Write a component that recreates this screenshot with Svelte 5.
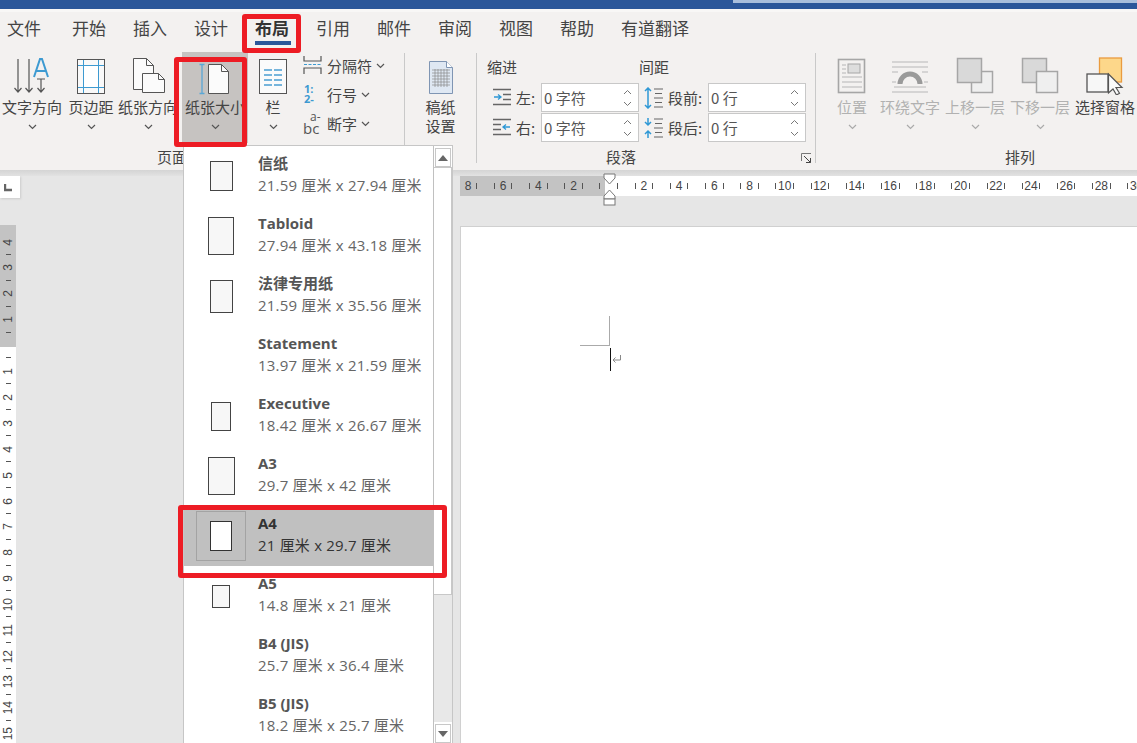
<script>
  const tabs = ['文件','开始','插入','设计','布局','引用','邮件','审阅','视图','帮助','有道翻译'];
  const papers = [
    { name:'信纸', size:'21.59 厘米 x 27.94 厘米', w:23, h:30 },
    { name:'Tabloid', size:'27.94 厘米 x 43.18 厘米', w:26, h:38 },
    { name:'法律专用纸', size:'21.59 厘米 x 35.56 厘米', w:23, h:33 },
    { name:'Statement', size:'13.97 厘米 x 21.59 厘米', w:0, h:0 },
    { name:'Executive', size:'18.42 厘米 x 26.67 厘米', w:20, h:29 },
    { name:'A3', size:'29.7 厘米 x 42 厘米', w:27, h:38 },
    { name:'A4', size:'21 厘米 x 29.7 厘米', w:22, h:30, selected:true },
    { name:'A5', size:'14.8 厘米 x 21 厘米', w:18, h:23 },
    { name:'B4 (JIS)', size:'25.7 厘米 x 36.4 厘米', w:0, h:0 },
    { name:'B5 (JIS)', size:'18.2 厘米 x 25.7 厘米', w:0, h:0 },
  ];
  const hLabels = ['8','6','4','2','','2','4','6','8','10','12','14','16','18','20','22','24','26','28','30'];
  const vLabels = ['4','3','2','1','','1','2','3','4','5','6','7','8','9','10','11','12','13','14','15'];
</script>

{#snippet chev(muted)}
  <svg class="chev" class:muted width="9" height="6" viewBox="0 0 9 6"><path d="M1 1l3.5 3.5L8 1" fill="none" stroke="currentColor" stroke-width="1.2"/></svg>
{/snippet}

{#snippet spin()}
  <span class="spin">
    <svg width="9" height="6" viewBox="0 0 9 6"><path d="M1 5l3.5-3.5L8 5" fill="none" stroke="#777" stroke-width="1"/></svg>
    <svg width="9" height="6" viewBox="0 0 9 6"><path d="M1 1l3.5 3.5L8 1" fill="none" stroke="#777" stroke-width="1"/></svg>
  </span>
{/snippet}

<div class="app">
  <div class="title"><span class="title-light"></span></div>

  <nav class="tabs">
    {#each tabs as t}
      <span class="tab" class:active={t === '布局'}>{t}</span>
    {/each}
  </nav>

  <div class="ribbon">
    <section class="group g1">
      <div class="row">
        <div class="big w1">
          <svg width="40" height="38" viewBox="0 0 40 38">
            <g fill="none" stroke="#555" stroke-width="1.2">
              <path d="M6 2v33M2.500 31l3.500 4 3.500-4"/><path d="M17 2v33M13.500 31l3.500 4 3.500-4"/><path d="M29 22v13M25.500 31l3.500 4 3.500-4M25 22h8"/>
            </g>
            <path d="M22 20L28 2h2l6 18M24 14h10" fill="none" stroke="#3d9ad1" stroke-width="2"/>
          </svg>
          <span>文字方向</span>{@render chev(false)}
        </div>
        <div class="big w2">
          <svg width="34" height="38" viewBox="0 0 34 38">
            <rect x="3.500" y="2.500" width="27" height="34" fill="#f9f9f9" stroke="#555"/>
            <path d="M9.500 3v33M24.500 3v33M4 8.500h26M4 30.500h26" stroke="#3d9ad1" fill="none"/>
            <rect x="10" y="9" width="14" height="21" fill="#fff"/>
          </svg>
          <span>页边距</span>{@render chev(false)}
        </div>
        <div class="big w3">
          <svg width="38" height="38" viewBox="0 0 38 38">
            <path d="M4.500 1.500h13l7 7v24h-20z" fill="#fbfbfb" stroke="#555"/><path d="M17.500 1.500v7h7" fill="none" stroke="#555"/>
            <path d="M13.500 16.500h16l6 6v13h-22z" fill="#fbfbfb" stroke="#555"/><path d="M29.500 16.500v6h6" fill="none" stroke="#555"/>
          </svg>
          <span>纸张方向</span>{@render chev(false)}
        </div>
        <div class="big w4 on">
          <svg width="38" height="38" viewBox="0 0 38 38">
            <path d="M6 7v30M3.500 7.500h5M3.500 36.500h5" fill="none" stroke="#5aa7d6" stroke-width="1.300"/>
            <path d="M12.500 7.500h13l7 7v22h-20z" fill="#fbfbfb" stroke="#555"/><path d="M25.500 7.500v7h7" fill="none" stroke="#555"/>
          </svg>
          <span>纸张大小</span>{@render chev(false)}
        </div>
        <div class="big w5">
          <svg width="30" height="38" viewBox="0 0 30 38">
            <rect x="1.500" y="2.500" width="27" height="34" fill="#fbfbfb" stroke="#555"/>
            <path d="M6 13h8M16 13h8M6 18h8M16 18h8M6 23h8M16 23h8M6 28h8M16 28h8" stroke="#4b9fd2" stroke-width="1.300"/>
          </svg>
          <span>栏</span>{@render chev(false)}
        </div>
        <div class="stack">
          <div class="small">
            <svg width="20" height="20" viewBox="0 0 20 20"><path d="M1 1v5h17V1M1 19v-6h17v6" fill="none" stroke="#555" stroke-width="1.200"/><path d="M1 9.500h17" stroke="#3d9ad1" stroke-dasharray="3 1.500"/></svg>
            <span>分隔符</span>{@render chev(false)}
          </div>
          <div class="small">
            <div class="ico lineno"><b>1:</b><b>2-</b></div>
            <span>行号</span>{@render chev(false)}
          </div>
          <div class="small">
            <div class="ico hyph"><i>a-</i><i>bc</i></div>
            <span>断字</span>{@render chev(false)}
          </div>
        </div>
      </div>
      <div class="glabel l1">页面设置</div>
    </section>

    <section class="group g2">
      <div class="big two">
        <svg width="34" height="38" viewBox="0 0 34 38">
          <path d="M5.500 4.500h17l6 6v26h-23z" fill="#dfe8f3" stroke="#7f95b3"/>
          <path d="M22.500 4.500v6h6" fill="#fff" stroke="#7f95b3"/>
          <path d="M8 13h18M8 16h18M8 19h18M8 22h18M8 25h18M8 28h18M11 12v18M14 12v18M17 12v18M20 12v18M23 12v18" stroke="#8a8a8a" stroke-width=".7"/>
        </svg>
        <span>稿纸<br/>设置</span>
      </div>
    </section>

    <section class="group g3">
      <div class="heads"><span>缩进</span><span>间距</span></div>
      <div class="fields">
        <svg width="19" height="19" viewBox="0 0 19 19"><path d="M0 1.500h18M10 6.500h8M10 11.500h8M0 16.500h18" stroke="#666" stroke-width="1.300"/><path d="M1 9h6M5 6.500L8 9l-3 2.500" fill="none" stroke="#2f98d5" stroke-width="1.300"/></svg>
        <span class="flabel">左:</span>
        <div class="input"><span>0 字符</span>{@render spin()}</div>
        <svg class="sp" width="20" height="22" viewBox="0 0 20 22"><path d="M4 1v20M1 4l3-3 3 3M1 18l3 3 3-3" fill="none" stroke="#2f98d5" stroke-width="1.500"/><path d="M10 2h9M10 11h9M10 20h9M11 6.500h7M11 15.500h7" stroke="#666" stroke-width="1.200"/></svg>
        <span class="flabel">段前:</span>
        <div class="input"><span>0 行</span>{@render spin()}</div>

        <svg width="19" height="19" viewBox="0 0 19 19"><path d="M0 1.500h18M0 6.500h8M0 11.500h8M0 16.500h18" stroke="#666" stroke-width="1.300"/><path d="M17 9h-6M13 6.500L10 9l3 2.500" fill="none" stroke="#2f98d5" stroke-width="1.300"/></svg>
        <span class="flabel">右:</span>
        <div class="input"><span>0 字符</span>{@render spin()}</div>
        <svg class="sp" width="20" height="22" viewBox="0 0 20 22"><path d="M4 1v7M1 5l3 3 3-3M4 21v-7M1 17l3-3 3 3" fill="none" stroke="#2f98d5" stroke-width="1.500"/><path d="M10 2h9M10 11h9M10 20h9M11 6.500h7M11 15.500h7" stroke="#666" stroke-width="1.200"/></svg>
        <span class="flabel">段后:</span>
        <div class="input"><span>0 行</span>{@render spin()}</div>
      </div>
      <div class="glabel l3">段落
        <svg class="launch" width="11" height="11" viewBox="0 0 11 11"><path d="M.5 8V.5H10" fill="none" stroke="#777"/><path d="M3 3l6.500 6.500M5 9.500h4.500V5" fill="none" stroke="#444"/></svg>
      </div>
    </section>

    <section class="group g4">
      <div class="row">
        <div class="big dis a1">
          <svg width="30" height="38" viewBox="0 0 30 38">
            <rect x="1.500" y="2.500" width="26" height="33" fill="#f3f1f0" stroke="#a6a6a6" stroke-width="1.600"/>
            <rect x="11" y="7" width="12" height="9" fill="#ddd" stroke="#a6a6a6"/>
            <path d="M5 8h4M5 12h4M5 16h4M5 20h20M5 25h20M5 30h20" stroke="#b5b5b5" stroke-width="1.200"/>
          </svg>
          <span>位置</span>{@render chev(true)}
        </div>
        <div class="big dis a2">
          <svg width="38" height="38" viewBox="0 0 38 38">
            <path d="M1 5h36M1 35h36M1 15h6M1 25h4M31 15h6M33 25h4M1 10h36" stroke="#b8b8b8" stroke-width="1.200" fill="none"/>
            <path d="M9 27a10 10 0 0 1 20 0" fill="none" stroke="#9a9a9a" stroke-width="5"/>
            <path d="M3 30h32" stroke="#b8b8b8"/>
          </svg>
          <span>环绕文字</span>{@render chev(true)}
        </div>
        <div class="big dis a3">
          <svg width="38" height="38" viewBox="0 0 38 38">
            <rect x="15.500" y="14.500" width="21" height="21" fill="#efefef" stroke="#a6a6a6" stroke-width="1.500"/>
            <rect x="1.500" y="1.500" width="24" height="24" fill="#d9d9d9" stroke="#a6a6a6" stroke-width="1.500"/>
          </svg>
          <span>上移一层</span>{@render chev(true)}
        </div>
        <div class="big dis a4">
          <svg width="38" height="38" viewBox="0 0 38 38">
            <rect x="1.500" y="1.500" width="24" height="24" fill="#d9d9d9" stroke="#a6a6a6" stroke-width="1.500"/>
            <rect x="15.500" y="14.500" width="21" height="21" fill="#efefef" stroke="#a6a6a6" stroke-width="1.500"/>
          </svg>
          <span>下移一层</span>{@render chev(true)}
        </div>
        <div class="big a5">
          <svg width="38" height="38" viewBox="0 0 38 38">
            <rect x="13.500" y="1" width="22" height="24" fill="#fdd78a" stroke="#ea9b3f" stroke-width="1.300"/>
            <rect x="1" y="17" width="21" height="18" fill="#f7f7f7" stroke="#555" stroke-width="1.300"/>
            <path d="M22.500 17v19l4.500-4 3.500 6 3-1.800-3.500-5.700H36z" fill="#fbfbfb" stroke="#555" stroke-width="1.200"/>
          </svg>
          <span>选择窗格</span>
        </div>
      </div>
      <div class="glabel l4">排列</div>
    </section>
  </div>
  <div class="shade"></div>

  <div class="work">
    <aside class="left">
      <div class="corner"><svg width="8" height="8" viewBox="0 0 8 8"><path d="M1 0v6h7" fill="none" stroke="#666" stroke-width="2.400"/></svg></div>
      <div class="vruler">
        {#each vLabels as n}
          <div class="vcell"><span class="vnum">{n}</span><i></i></div>
        {/each}
      </div>
    </aside>
    <main class="doc">
      <div class="hruler">
        {#each hLabels as n}
          <div class="hcell"><i></i><span>{n}</span><i></i></div>
        {/each}
      </div>
      <div class="page">
        <span class="mark-v"></span><span class="mark-h"></span><span class="caret"></span>
        <svg class="para" width="10" height="9" viewBox="0 0 10 9"><path d="M8.500 0v5H1M3.500 2.500L1 5l2.500 2.500" fill="none" stroke="#888"/></svg>
      </div>
      <svg class="indent" width="13" height="33" viewBox="0 0 13 33">
        <path d="M1 1h11v4l-5.500 6L1 5z" fill="#fff" stroke="#777"/>
        <path d="M6.500 17L12 23v3H1v-3z" fill="#fff" stroke="#777"/>
        <rect x="1" y="26" width="11" height="6" fill="#fff" stroke="#777"/>
      </svg>
    </main>
  </div>

  <div class="dropdown">
    <div class="list">
      {#each papers as p}
        <div class="item" class:selected={p.selected}>
          <div class="thumb">
            {#if p.w}<span class="sheet" style="width:{p.w}px;height:{p.h}px"></span>{/if}
          </div>
          <div class="meta"><b>{p.name}</b><span>{p.size}</span></div>
        </div>
      {/each}
    </div>
    <div class="scroll">
      <div class="sbtn"><svg width="10" height="6" viewBox="0 0 10 6"><path d="M5 0l5 6H0z" fill="#666"/></svg></div>
      <div class="thumbbar"></div>
      <div class="track"></div>
      <div class="sbtn"><svg width="10" height="6" viewBox="0 0 10 6"><path d="M5 6L0 0h10z" fill="#666"/></svg></div>
    </div>
  </div>

  <span class="red r-tab"></span>
  <span class="red r-btn"></span>
  <span class="red r-item"></span>
</div>

<style>
  :global(body){margin:0;background:#e6e6e6}
  .app{position:relative;width:1137px;height:743px;overflow:hidden;background:#e6e6e6;color:#444;
    font-family:"Noto Sans CJK SC","Noto Sans",sans-serif;font-size:15px;display:flex;flex-direction:column}
  .title{height:9px;background:#2b579a;border-bottom:3px solid #f8f7f6;position:relative;flex:none}
  .title-light{position:absolute;left:733px;right:0;top:0;height:3px;background:#a9bfdc}

  .tabs{display:flex;gap:27px;height:35px;box-sizing:border-box;padding:0 0 4px 7px;background:#f3f1f0;align-items:center;font-size:17px;color:#444;flex:none}
  .tab{line-height:30px;position:relative;white-space:nowrap}
  .tab:first-child{margin-right:4px}
  .tab.active{font-weight:700;color:#333}
  .tab.active::after{content:"";position:absolute;left:0;right:-2px;bottom:-2px;height:4px;background:#2b579a}

  .ribbon{display:flex;height:123px;background:#f3f1f0;flex:none}
  .group{position:relative;box-sizing:border-box;flex:none;height:110px;margin-top:6px;border-right:1px solid #c9c9c9}
  .g1{width:405px}
  .g2{width:72px;display:flex;justify-content:center}
  .g3{width:339px;padding-left:10px}
  .g4{flex:1;border:none;padding-left:6px}
  .row{display:flex}
  .big{display:flex;flex-direction:column;align-items:center;height:91px;padding-top:4px;box-sizing:border-box;white-space:nowrap;line-height:19px;color:#444}
  .big svg:first-child{height:38px;margin-bottom:2px;flex:none}
  .big.dis{color:#b1b1b1}
  .w1{width:64px}.w2{width:54px}.w3{width:60px}.w4{width:66px;margin-left:4px}.w5{width:50px}
  .a1,.a2,.a3,.a4,.a5{width:60px}
  .a2{margin-left:-2px}
  .a3,.a4,.a5{margin-left:5px}
  .on{background:#c6c3c1;margin-top:-1px;padding-top:5px}
  .two{width:72px;text-align:center}
  .chev{margin-top:8px;color:#555;flex:none}
  .chev.muted{color:#aaa}
  .stack{margin-left:5px;display:flex;flex-direction:column;gap:9px;padding-top:2px}
  .small{display:flex;align-items:center;gap:4px;height:20px;white-space:nowrap}
  .small svg:first-child{width:20px;flex:none}
  .small .chev{margin:2px 0 0 0}
  .ico{width:20px;flex:none;display:flex;flex-direction:column;font-family:"Open Sans",sans-serif}
  .lineno{font-size:11px;line-height:10px;padding-left:1px;box-sizing:border-box}
  .lineno b{font-weight:700;color:#3d9ad1}
  .hyph i{font-style:normal;color:#555;line-height:10px}
  .hyph i:first-child{font-size:12px;padding-left:7px}
  .hyph i:last-child{font-size:15px;line-height:12px}
  .glabel{position:absolute;bottom:-4px;line-height:20px;white-space:nowrap}
  .l1{left:157px}
  .l3{left:129px;width:209px}
  .l4{left:189px}
  .launch{position:absolute;right:3px;top:6px}

  .heads{display:flex;padding-top:4px;line-height:20px}
  .heads span{width:152px}
  .fields{display:grid;grid-template-columns:23px 25px 98px 29px 40px 98px;grid-auto-rows:29px;row-gap:1px;align-items:center;margin:6px 0 0 6px}
  .fields svg.sp{margin-left:5px}
  .flabel{white-space:nowrap}
  .input{box-sizing:border-box;height:29px;width:98px;background:#fff;border:1px solid #c8c8c8;display:flex;align-items:center;justify-content:space-between;padding:0 6px 0 2px;color:#555}
  .spin{display:flex;flex-direction:column;gap:6px}
  .spin svg{display:block}

  .shade{height:6px;background:linear-gradient(#d4d4d4,#e2e2e2);flex:none}
  .work{flex:1;display:flex;min-height:0}
  .left{width:20px;flex:none;display:flex;flex-direction:column}
  .corner{height:22px;background:#fff;display:flex;align-items:flex-end;padding:0 0 6px 4px;box-sizing:border-box;box-shadow:1px 1px 2px #ccc}
  .vruler{width:16px;margin-top:27px;padding-top:4px;background:linear-gradient(#c3c3c3 122px,#fff 122px);flex:1;overflow:hidden}
  .vcell{height:25.9px;position:relative;display:flex;align-items:center;justify-content:center}
  .vcell i{position:absolute;left:6px;width:5px;bottom:0;height:1px;background:#555}
  .vnum{writing-mode:vertical-rl;transform:rotate(180deg);font:12px "Liberation Sans",sans-serif;color:#444;line-height:12px}

  .doc{flex:1;position:relative;margin-left:440px;min-width:0}
  .hruler{height:20px;display:flex;overflow:hidden;background:linear-gradient(90deg,#c3c3c3 145px,#fff 145px);font:12px "Liberation Sans",sans-serif;color:#444}
  .hcell{flex:none;width:35.2px;box-sizing:border-box;padding:0 8.300px;display:flex;justify-content:space-between;align-items:center}
  .hcell:first-child{margin-left:-9.600px}
  .hcell i{width:1px;height:6px;background:#555;flex:none}
  .page{position:relative;margin-top:30px;height:520px;background:#fff;border:1px solid #d0d0d0;border-right:none;box-sizing:border-box}
  .mark-v,.mark-h,.caret,.para{position:absolute}
  .mark-v{left:148px;top:89px;width:1px;height:30px;background:#aaa}
  .mark-h{left:119px;top:118px;width:30px;height:1px;background:#aaa}
  .caret{left:149px;top:121px;width:1px;height:23px;background:#111}
  .para{left:151px;top:128px}
  .indent{position:absolute;left:143px;top:-3px}

  .dropdown{position:absolute;left:183px;top:145px;width:270px;height:598px;box-sizing:border-box;background:#fff;border:1px solid #c6c6c6;border-bottom:none;display:flex}
  .list{width:249px;flex:none}
  .item{display:flex;height:60px;box-sizing:border-box}
  .item.selected{background:#c0c0c0}
  .thumb{box-sizing:border-box;width:50px;height:50px;margin:5px 0 0 12px;flex:none;display:flex;align-items:center;justify-content:center;border:1px solid transparent}
  .selected .thumb{border-color:#a3a3a3}
  .sheet{box-sizing:border-box;background:#f7f7f7;border:1px solid #444;display:block}
  .selected .sheet{background:#fff;border-color:#333}
  .meta{display:flex;flex-direction:column;margin-left:12px;padding-top:6px;font-family:"Open Sans","Noto Sans CJK SC",sans-serif;font-size:15px;line-height:22px;color:#666;white-space:nowrap}
  .meta span{letter-spacing:.2px}
  .meta b{font-weight:700;color:#555}
  .selected .meta,.selected .meta b{color:#333}
  .scroll{flex:1;display:flex;flex-direction:column;border-left:1px solid #c0c0c0;background:#fff}
  .sbtn{height:19px;margin:2px 1px 0;box-sizing:border-box;border:1px solid #c8c8c8;background:#fff;display:flex;align-items:center;justify-content:center;flex:none}
  .thumbbar{height:428px;flex:none;border:1px solid #c8c8c8;border-width:1px 1px 1px 0;box-sizing:border-box}
  .track{flex:1;background:#e8e8e8}
  .red{position:absolute;box-sizing:border-box;border:5px solid #ed1c24;border-radius:3px;pointer-events:none}
  .r-tab{left:242px;top:14px;width:59px;height:39px}
  .r-btn{left:174px;top:57px;width:73px;height:90px}
  .r-item{left:178px;top:505px;width:269px;height:73px}
</style>
